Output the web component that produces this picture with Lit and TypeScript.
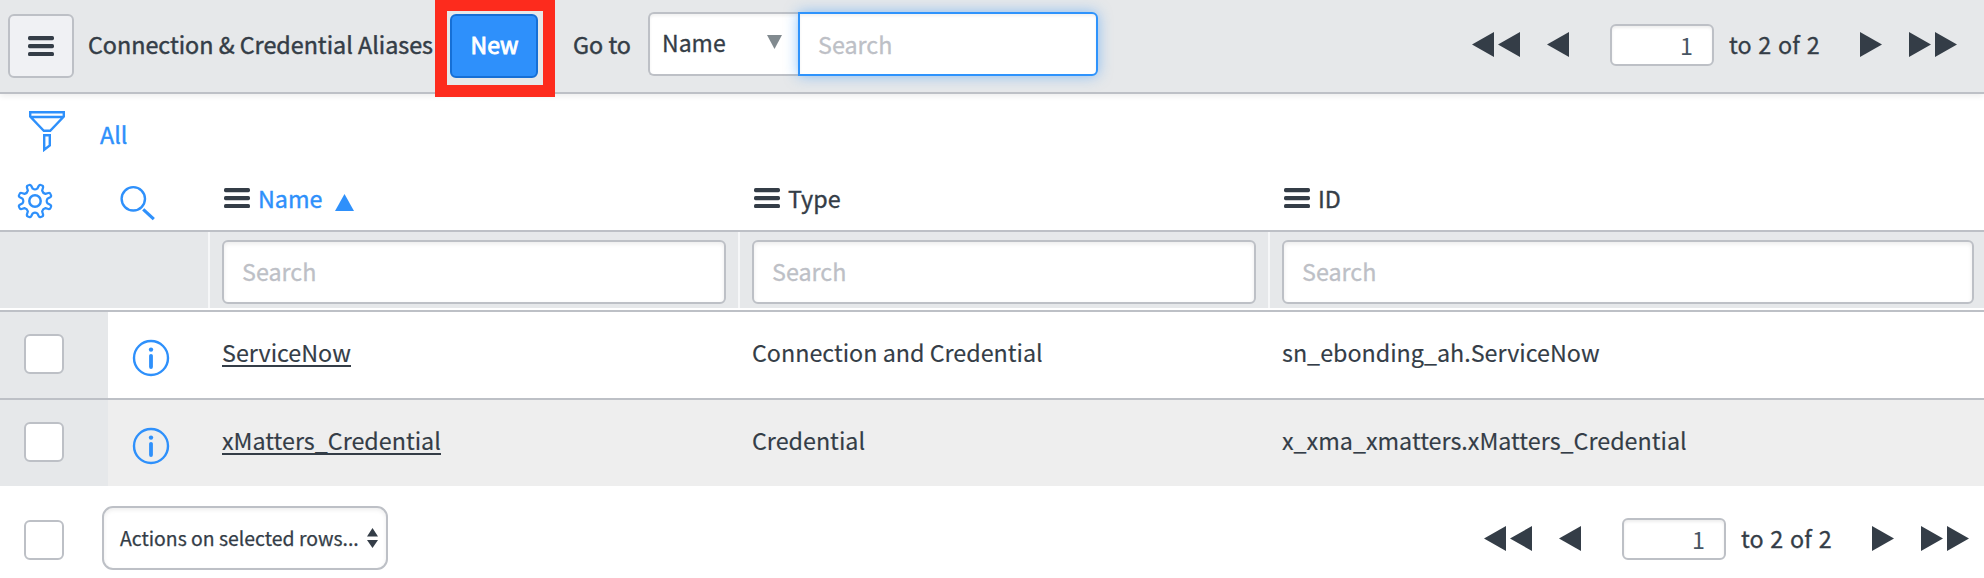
import { LitElement, html, svg, css } from "lit";
import { customElement, property } from "lit/decorators.js";

const bars = html`<svg class="bars" width="26" height="20" viewBox="0 0 26 20">
  ${[0, 8, 16].map((y) => svg`<rect x="0" y=${y} width="26" height="4.2" rx="1.6" fill="#343d47"/>`)}
</svg>`;

const info = html`<svg width="38" height="38" viewBox="0 0 38 38">
  <circle cx="19" cy="19" r="17" fill="none" stroke="#2e90fb" stroke-width="2.4" />
  <circle cx="19" cy="10.6" r="2.2" fill="#2e90fb" />
  <path d="M19 16.8v11.2" stroke="#2e90fb" stroke-width="3.8" stroke-linecap="round" />
</svg>`;

const funnel = html`<svg width="38" height="42" viewBox="0 0 38 42" fill="none" stroke="#2e90fb" stroke-width="2.4">
  <path d="M2.2 2.2h33.6v4.4L22.2 20.8h-6.4L2.2 6.600z M2 7h34" />
  <path d="M16.2 25.2h5.6v10.3l-5.6 4.300z" />
</svg>`;

/* Eight-toothed gear outline, built from polar steps round the hub. */
const gearPath = (() => {
  const pts: string[] = [];
  for (let i = 0; i < 8; i++) {
    const base = i * 45 + 22.5 - 90;
    const at = (deg: number, r: number) => {
      const a = ((base + deg) * Math.PI) / 180;
      return `${(18 + r * Math.cos(a)).toFixed(2)} ${(18 + r * Math.sin(a)).toFixed(2)}`;
    };
    pts.push(`${i ? "L" : "M"}${at(-12, 12.6)}L${at(-8.5, 15.6)}Q${at(-7, 17.2)} ${at(-2.5, 17)}`);
    pts.push(`L${at(2.5, 17)}Q${at(7, 17.2)} ${at(8.5, 15.6)}L${at(12, 12.6)}Q${at(22.5, 11)} ${at(33, 12.6)}`);
  }
  return pts.join("") + "z";
})();

const gear = html`<svg width="36" height="36" viewBox="0 0 36 36" fill="none" stroke="#2e90fb" stroke-width="2.2" stroke-linejoin="round">
  <path d=${gearPath} /><circle cx="18" cy="18" r="5.7" stroke-width="2.5" />
</svg>`;

const magnifier = html`<svg width="36" height="36" viewBox="0 0 36 36" fill="none" stroke="#2e90fb">
  <circle cx="13.3" cy="13.8" r="11.7" stroke-width="2.4" />
  <path d="M23.2 24.3L33.8 34.1" stroke-width="3.2" />
</svg>`;

@customElement("list-pager")
class ListPager extends LitElement {
  static styles = css`
    :host { display: flex; align-items: center; height: 42px; font-size: 23.3px; line-height: 34px; color: #343d47; }
    svg { display: block; fill: #343d47; margin-bottom: 1px; }
    .first { margin-right: 27px; }
    .prev { margin-right: 41px; }
    .page {
      box-sizing: border-box; width: 104px; height: 42px; margin: 0 15px 0 0; padding: 0 19px 0 0;
      border: 2px solid #bdc0c6; border-radius: 6px; background: #fff; text-align: right;
      font: inherit; color: #485563; box-shadow: inset 0 2px 3px rgba(0, 0, 0, 0.07); outline: none;
    }
    .range { width: 131px; padding-bottom: 2px; white-space: nowrap; word-spacing: 1.6px; -webkit-text-stroke: 0.3px; }
    .next { margin-right: 27px; }
  `;
  render() {
    return html`
      <svg class="first" width="48" height="26" viewBox="0 0 48 26"><path d="M0 12.500L22 0v25zM26 12.500L48 0v25z" /></svg>
      <svg class="prev" width="22" height="26" viewBox="0 0 22 26"><path d="M0 12.500L22 0v25z" /></svg>
      <input class="page" value="1" aria-label="Row" />
      <span class="range">to 2 of 2</span>
      <svg class="next" width="22" height="26" viewBox="0 0 22 26"><path d="M22 12.500L0 0v25z" /></svg>
      <svg width="48" height="26" viewBox="0 0 48 26"><path d="M22 12.500L0 0v25zM48 12.500L26 0v25z" /></svg>
    `;
  }
}

interface Alias { name: string; type: string; id: string; }

@customElement("app-root")
class AppRoot extends LitElement {
  @property({ attribute: false }) rows: Alias[] = [
    { name: "ServiceNow", type: "Connection and Credential", id: "sn_ebonding_ah.ServiceNow" },
    { name: "xMatters_Credential", type: "Credential", id: "x_xma_xmatters.xMatters_Credential" },
  ];

  static styles = css`
    :host {
      display: block; width: 1984px; height: 578px; overflow: hidden; background: #fff; color: #343d47;
      font-family: "Noto Sans CJK SC", "Source Sans Pro", sans-serif; font-size: 23.3px; line-height: 34px;
    }
    * { box-sizing: border-box; }
    svg { display: block; flex: none; }
    .bar {
      position: relative; display: flex; align-items: center; height: 94px; padding: 0 27px 0 8px;
      background: #e6e8ea; border-bottom: 2px solid #bdc0c6; box-shadow: 0 2px 6px rgba(0, 0, 0, 0.08);
    }
    .menu {
      display: flex; align-items: center; justify-content: center; width: 66px; height: 64px;
      border: 2px solid #bdc0c6; border-radius: 6px; background: #f0f1f4;
    }
    .title { width: 362px; margin-left: 14px; padding-bottom: 4px; white-space: nowrap; -webkit-text-stroke: 0.45px; }
    .new {
      width: 88px; height: 64px; padding: 0 0 5px 1px; border: 2px solid #156fd6; border-radius: 6px;
      background: #2e90fb; color: #fff; font: inherit; font-size: 23px; -webkit-text-stroke: 0.9px;
    }
    .callout { position: absolute; left: 435px; top: -1px; width: 120px; height: 98px; border: 12.5px solid #fd2b1d; }
    .goto { width: 75px; margin-left: 35px; padding-bottom: 4px; white-space: nowrap; -webkit-text-stroke: 0.45px; }
    .combo {
      display: flex; align-items: center; justify-content: space-between; width: 150px; height: 64px; margin-top: -4px;
      padding: 0 16px 4px 12px; border: 2px solid #bdc0c6; border-right: 0; border-radius: 6px 0 0 6px; background: #fff;
      box-shadow: inset 0 2px 3px rgba(0, 0, 0, 0.06); font-size: 23px; -webkit-text-stroke: 0.3px;
    }
    .field {
      height: 64px; width: 100%; padding: 0 18px 2px; border: 2px solid #bdc0c6; border-radius: 6px; background: #fff;
      font: inherit; box-shadow: inset 0 2px 4px rgba(0, 0, 0, 0.08); outline: none;
    }
    .field::placeholder { color: #bdc0c6; opacity: 1; -webkit-text-stroke: 0.3px; }
    .focus {
      width: 300px; margin-top: -4px; padding-bottom: 0; border-color: #2e93fc; border-radius: 0 6px 6px 0;
      box-shadow: 0 0 14px rgba(46, 147, 252, 0.5), inset 0 2px 3px rgba(0, 0, 0, 0.06);
    }
    .bar list-pager { margin-left: auto; margin-top: -2px; }
    .crumbs { display: flex; height: 78px; padding: 16px 0 0 28px; gap: 34px; }
    .crumbs a, .sorted { color: #2e90fb; -webkit-text-stroke: 0.4px; }
    .crumbs a { margin-top: 7px; }
    .grid { display: grid; grid-template-columns: 108px 100px 530px 530px 1fr; }
    .head { height: 60px; border-bottom: 2px solid #bdc0c6; -webkit-text-stroke: 0.35px; }
    .head > div { display: flex; align-items: flex-start; }
    .gear { padding: 10.5px 0 0 17px; }
    .glass { padding: 12.5px 0 0 11.5px; }
    .col { padding: 9px 0 0 16px; gap: 8px; }
    .col .bars { margin-top: 7px; }
    .sort { margin: 13px 0 0 5px; }
    .filters { height: 78px; background: #e6e8ea; border-bottom: 2px solid #fff; }
    .filters > div { padding: 8px 12px 0; border-left: 2px solid #f6f7f8; }
    .filters > .blank { grid-column: span 2; border: 0; }
    .filters > :last-child { padding-right: 10px; }
    .row { height: 88px; border-top: 2px solid #bdc0c6; }
    .row:nth-child(even) { background: #eee; }
    .pick { padding: 22px 0 0 24px; background: #e6e8ea; }
    .check { appearance: none; display: block; width: 40px; height: 40px; margin: 0; border: 2px solid #bdc0c6; border-radius: 6px; background: #fff; }
    .info { padding: 27px 0 0 23.500px; }
    .cell { padding: 23px 0 0 14px; white-space: nowrap; -webkit-text-stroke: 0.15px; }
    .cell a { display: inline-block; height: 31.500px; border-bottom: 2px solid #343d47; }
    .foot { display: flex; height: 92px; padding: 20px 15px 0 24px; }
    .foot .check { margin-top: 14px; }
    .actions {
      display: flex; align-items: center; justify-content: space-between; width: 286px; height: 64px; margin-left: 38px;
      padding: 0 8px 0 16px; border: 2px solid #bdc0c6; border-radius: 11px; background: #fff;
      box-shadow: inset 0 2px 4px rgba(0, 0, 0, 0.07); font-size: 19.4px; white-space: nowrap; -webkit-text-stroke: 0.25px;
    }
    .foot list-pager { margin: 12px 0 0 auto; }
  `;

  render() {
    return html`
      <header class="bar">
        <button class="menu" aria-label="Menu">${bars}</button>
        <span class="title">Connection &amp; Credential Aliases</span>
        <button class="new">New</button>
        <span class="goto">Go to</span>
        <div class="combo"><span>Name</span><svg width="15" height="14" viewBox="0 0 15 14"><path d="M0 0h15L7.500 14z" fill="#818a8f" /></svg></div>
        <input class="field focus" placeholder="Search" />
        <list-pager></list-pager>
        <i class="callout"></i>
      </header>
      <nav class="crumbs">${funnel}<a>All</a></nav>
      <div class="grid head">
        <div class="gear">${gear}</div>
        <div class="glass">${magnifier}</div>
        <div class="col">${bars}<span class="sorted">Name</span><svg class="sort" width="19" height="17" viewBox="0 0 19 17"><path d="M9.500 0L19 17H0z" fill="#2e90fb" /></svg></div>
        <div class="col">${bars}<span>Type</span></div>
        <div class="col">${bars}<span>ID</span></div>
      </div>
      <div class="grid filters">
        <div class="blank"></div>
        ${[0, 1, 2].map(() => html`<div><input class="field" placeholder="Search" /></div>`)}
      </div>
      <main>
        ${this.rows.map((r) => html`<div class="grid row">
          <div class="pick"><input class="check" type="checkbox" /></div>
          <div class="info">${info}</div>
          <div class="cell"><a>${r.name}</a></div>
          <div class="cell">${r.type}</div>
          <div class="cell">${r.id}</div>
        </div>`)}
      </main>
      <footer class="foot">
        <input class="check" type="checkbox" />
        <div class="actions"><span>Actions on selected rows...</span><svg width="11" height="20" viewBox="0 0 11 20"><path d="M5.500 0L11 8.500H0zM5.500 20L11 12H0z" fill="#343d47" /></svg></div>
        <list-pager></list-pager>
      </footer>
    `;
  }
}
